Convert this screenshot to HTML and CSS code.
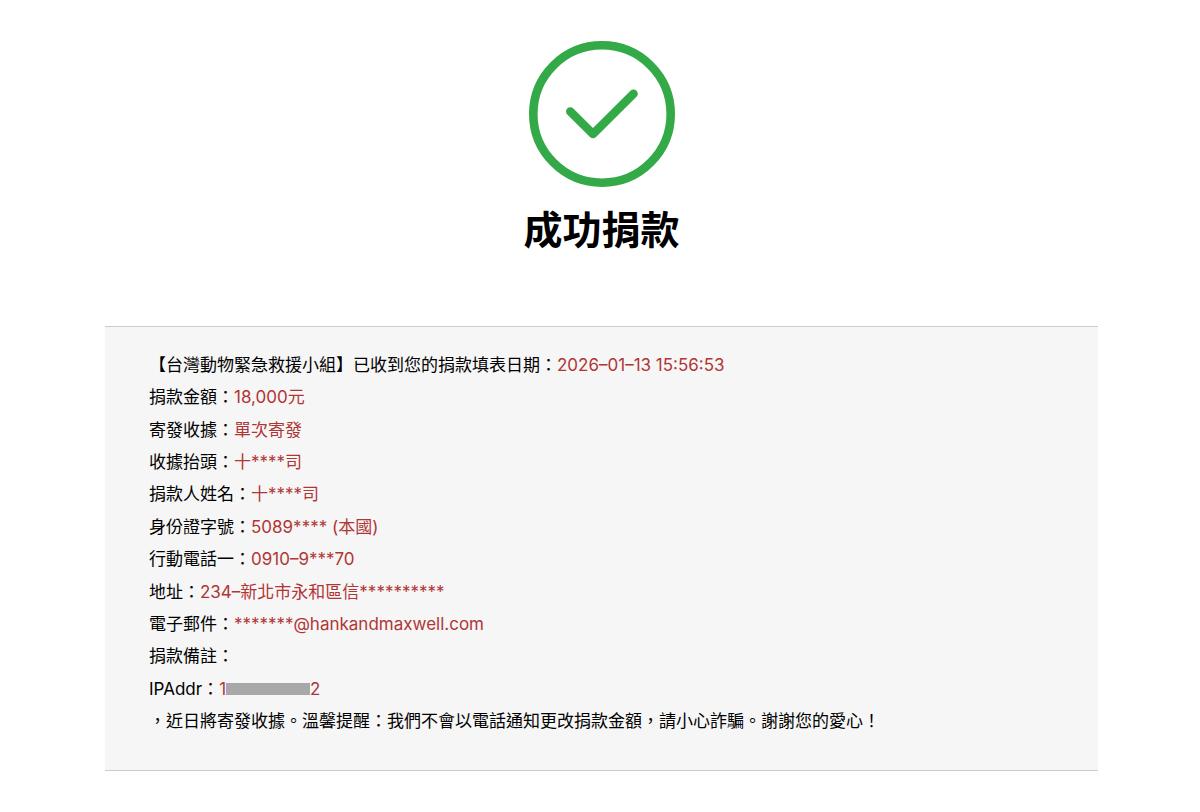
FILE: index.html
```html
<!DOCTYPE html>
<html lang="zh-Hant">

<head>
    <meta charset="UTF-8">
    <meta name="viewport" content="width=device-width, initial-scale=1">
    <title>成功捐款</title>
    <link rel="stylesheet" href="styles.css">
</head>

<body>
    <main class="page">
        <header class="result">
            <svg class="result-icon" viewBox="0 0 146 146" aria-hidden="true">
                <circle cx="73" cy="73" r="68.7" />
                <path d="M41.300 70.500L64 93L104.500 52.800" />
            </svg>
            <h1>成功捐款</h1>
        </header>

        <section class="detail">
            <p>【台灣動物緊急救援小組】已收到您的捐款填表日期：<span>2026–01–13 15:56:53</span></p>
            <p>捐款金額：<span>18,000元</span></p>
            <p>寄發收據：<span>單次寄發</span></p>
            <p>收據抬頭：<span>十****司</span></p>
            <p>捐款人姓名：<span>十****司</span></p>
            <p>身份證字號：<span>5089**** (本國)</span></p>
            <p>行動電話一：<span>0910–9***70</span></p>
            <p>地址：<span>234–新北市永和區信**********</span></p>
            <p>電子郵件：<span>*******@hankandmaxwell.com</span></p>
            <p>捐款備註：</p>
            <p>IPAddr：<span>1<i class="mask"></i>2</span></p>
            <p>，近日將寄發收據。溫馨提醒：我們不會以電話通知更改捐款金額，請小心詐騙。謝謝您的愛心！</p>
        </section>
    </main>
</body>

</html>
```

FILE: styles.css
```css
* {
    box-sizing: border-box;
}

body {
    margin: 0;
    background-color: #fff;
    color: #000;
    font-family: Inter, "Noto Sans CJK TC", sans-serif;
    font-size: 17px;
    line-height: 32px;
}

.page {
    padding: 41px 102px 40px 105px;
}

.result {
    display: flex;
    flex-direction: column;
    align-items: center;
    gap: 15px;
    margin-bottom: 68px;
}

.result-icon {
    width: 146px;
    height: 146px;
    fill: none;
    stroke: #33aa47;
    stroke-width: 8.600;
    stroke-linecap: round;
    stroke-linejoin: round;
}

.result h1 {
    margin: 0;
    font-size: 39px;
    line-height: 56px;
    font-weight: 700;
}

.detail {
    display: flex;
    flex-direction: column;
    justify-content: space-between;
    min-height: 445px;
    padding: 22px 44px 33px;
    background-color: #f6f6f6;
    border-top: 1px solid #ccc;
    border-bottom: 1px solid #ccc;
}

.detail p {
    margin: 0;
}

.detail span {
    color: #b03535;
}

.mask {
    display: inline-block;
    width: 84px;
    height: 12px;
    background-color: #a8a8a8;
}
```
